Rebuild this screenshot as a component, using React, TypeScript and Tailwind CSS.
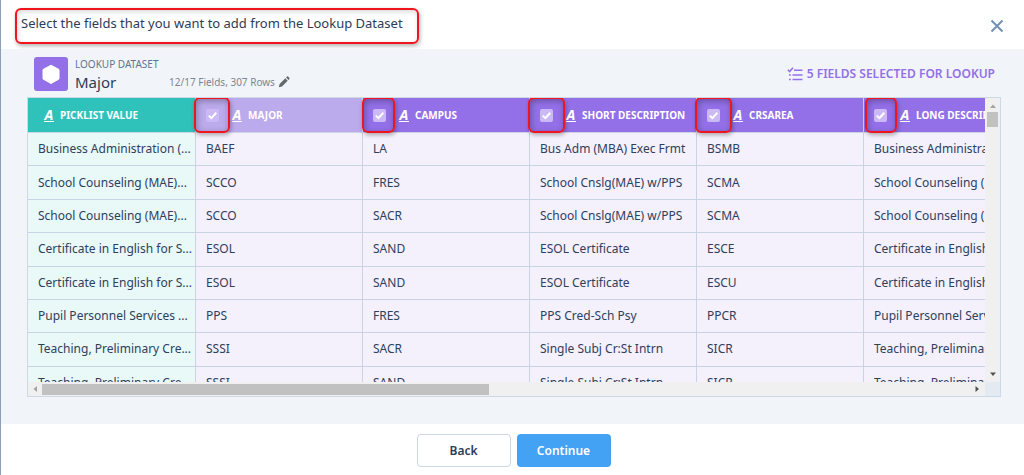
import type { ReactNode } from 'react';
import { clsx } from 'clsx';

type Column = {
  label: string;
  header: string;
  // frame drawn round the column's check box
  frame?: string;
};

const columns: Column[] = [
  { label: 'Picklist Value', header: 'w-[168px] bg-[#2fc2ba]' },
  { label: 'Major', header: 'w-[167px] bg-[#bbaaec]', frame: '-left-0.5 w-9' },
  { label: 'Campus', header: 'w-[167px] bg-[#9370e8]', frame: '-left-px w-[33px]' },
  { label: 'Short Description', header: 'w-[167px] bg-[#9370e8]', frame: '-left-0.5 w-[37px]' },
  { label: 'CRSAREA', header: 'w-[167px] bg-[#9370e8]', frame: '-left-0.5 w-[37px]' },
  { label: 'Long Description', header: 'w-[167px] bg-[#9370e8]', frame: 'left-px w-8' },
];

const rows = [
  ['Business Administration (...', 'BAEF', 'LA', 'Bus Adm (MBA) Exec Frmt', 'BSMB', 'Business Administration'],
  ['School Counseling (MAE)...', 'SCCO', 'FRES', 'School Cnslg(MAE) w/PPS', 'SCMA', 'School Counseling (MAE)'],
  ['School Counseling (MAE)...', 'SCCO', 'SACR', 'School Cnslg(MAE) w/PPS', 'SCMA', 'School Counseling (MAE)'],
  ['Certificate in English for S...', 'ESOL', 'SAND', 'ESOL Certificate', 'ESCE', 'Certificate in English'],
  ['Certificate in English for S...', 'ESOL', 'SAND', 'ESOL Certificate', 'ESCU', 'Certificate in English'],
  ['Pupil Personnel Services ...', 'PPS', 'FRES', 'PPS Cred-Sch Psy', 'PPCR', 'Pupil Personnel Services'],
  ['Teaching, Preliminary Cre...', 'SSSI', 'SACR', 'Single Subj Cr:St Intrn', 'SICR', 'Teaching, Preliminary'],
  ['Teaching, Preliminary Cre...', 'SSSI', 'SAND', 'Single Subj Cr:St Intrn', 'SICR', 'Teaching, Preliminary'],
];

function TextTypeIcon() {
  return (
    <span aria-hidden="true" className="w-2.5 border-b border-white text-center text-sm leading-3 font-bold italic">
      A
    </span>
  );
}

function FieldCheckbox({ label }: { label: string }) {
  return (
    <span className="mr-[13px] grid size-[13px] shrink-0">
      <input
        type="checkbox"
        defaultChecked
        aria-label={`Add ${label}`}
        className="peer col-start-1 row-start-1 size-[13px] appearance-none rounded-xs bg-[#cbb9f5]"
      />
      <svg
        viewBox="0 0 13 13"
        className="pointer-events-none invisible col-start-1 row-start-1 size-[13px] peer-checked:visible"
        fill="none"
        stroke="white"
        strokeWidth="2"
      >
        <path d="M2.8 6.6 5.4 9.1 10.3 3.8" />
      </svg>
    </span>
  );
}

function HeaderCell({ column }: { column: Column }) {
  return (
    <th
      scope="col"
      className={clsx('relative h-[35px] border-r border-b border-[#cbd5e6] p-0 text-left', column.header)}
    >
      <div className={clsx('flex items-center', column.frame ? 'pl-2.5' : 'pl-4')}>
        {column.frame && <FieldCheckbox label={column.label} />}
        <TextTypeIcon />
        <span className="ml-1.5 text-[10px] leading-4 font-bold whitespace-nowrap uppercase">{column.label}</span>
      </div>
      {column.frame && (
        <span
          className={clsx(
            'pointer-events-none absolute -top-px z-10 h-9 rounded-md border-2 border-[#f0141e] shadow-[1px_2px_4px_rgba(0,0,0,0.3),inset_1px_2px_6px_rgba(0,0,0,0.3)]',
            column.frame,
          )}
        />
      )}
    </th>
  );
}

function FieldsTable() {
  return (
    <table className="h-[302px] w-[1003px] table-fixed border-separate border-spacing-0">
      <thead className="text-white">
        <tr>
          {columns.map((column) => (
            <HeaderCell key={column.label} column={column} />
          ))}
        </tr>
      </thead>
      <tbody className="text-xs text-[#2f405c]">
        {rows.map((row, i) => (
          <tr key={i}>
            {row.map((value, j) => (
              <td
                key={j}
                className={clsx(
                  'border-r border-b border-[#c9d4e3] py-0 pr-0.5 pl-2.5 whitespace-nowrap',
                  j === 0 ? 'bg-[#e8f9f8]' : 'bg-[#f4f0fc]',
                )}
              >
                {value}
              </td>
            ))}
          </tr>
        ))}
      </tbody>
    </table>
  );
}

function Arrow({ d, className }: { d: string; className: string }) {
  return (
    <svg viewBox="0 0 8 8" className={clsx('size-2 shrink-0', className)} fill="currentColor" aria-hidden="true">
      <path d={d} />
    </svg>
  );
}

function ScrollFrame({ children }: { children: ReactNode }) {
  return (
    <div className="grid h-[300px] grid-cols-[minmax(0,1fr)_15px] grid-rows-[minmax(0,1fr)_14px] border border-[#cfd9e6] bg-[#e4eaf2]">
      <div className="overflow-hidden">{children}</div>
      <div className="flex flex-col items-center bg-[#f0f0f0] py-1">
        <Arrow d="M1 6 4 2.5 7 6z" className="text-[#a3a3a3]" />
        <div className="mt-0.5 h-[15px] w-[11px] bg-[#c1c1c1]" />
        <Arrow d="M1 2.5 4 6 7 2.5z" className="mt-auto text-[#505050]" />
      </div>
      <div className="flex items-center bg-[#f0f0f0] pr-1 pl-[3px]">
        <Arrow d="M6 1 2.5 4 6 7z" className="text-[#a3a3a3]" />
        <div className="ml-[3px] h-[11px] w-[47%] bg-[#c1c1c1]" />
        <Arrow d="M2.5 1 6 4 2.5 7z" className="ml-auto text-[#505050]" />
      </div>
    </div>
  );
}

function DatasetHeader() {
  return (
    <div className="flex items-center justify-between pr-1.5 pl-[7px]">
      <div className="flex items-center gap-[7px]">
        <svg viewBox="0 0 34 34" className="size-[34px]" aria-hidden="true">
          <rect width="34" height="34" rx="3" fill="#9370e8" />
          <path d="M17 8.2 25 12.5V22L17 26.5 9 22V12.5z" fill="white" stroke="white" strokeLinejoin="round" />
        </svg>
        <div>
          <p className="text-[10px] leading-4 text-[#5f7594] uppercase">Lookup Dataset</p>
          <div className="flex items-center">
            <h2 className="w-[94px] text-[15px] leading-5 text-[#2b3c58]">Major</h2>
            <span className="text-[10px] leading-5 text-[#7d8590]">12/17 Fields, 307 Rows</span>
            <button type="button" aria-label="Edit fields" className="ml-[3px] text-[#626870]">
              <svg viewBox="0 0 12 12" className="size-3" fill="currentColor">
                <path d="M.8 11.2 1.6 8 7.3 2.3 9.7 4.7 4 10.4zM8.1 1.5 9 .6a.8.8 0 0 1 1.1 0l1.3 1.3a.8.8 0 0 1 0 1.1l-.9.9z" />
              </svg>
            </button>
          </div>
        </div>
      </div>
      <div className="flex items-center gap-1 text-[#9370e8]">
        <svg viewBox="0 0 16 16" className="size-4" fill="none" stroke="currentColor" strokeWidth="1.5" aria-hidden="true">
          <path d="M.8 3.8 2.6 5.6 6 1.8M7 4.2H15.5M5.5 9H15.5M5.5 13.5H15.5M2 9H3.8M2 13.5H3.8" />
        </svg>
        <span className="text-xs font-semibold uppercase">5 fields selected for lookup</span>
      </div>
    </div>
  );
}

export default function App() {
  return (
    <div className="flex min-h-screen flex-col border-l border-[#8e9eb8] bg-white font-['Noto_Sans',sans-serif]">
      <header className="flex h-[49px] items-center justify-between pt-[3px] pr-5 pl-[14px]">
        <h1 className="h-9 rounded-md border-2 border-[#f0141e] pr-3.5 pl-1 text-[13px] leading-[26px] text-[#2b3c58] shadow-[1px_2px_4px_rgba(0,0,0,0.3),inset_1px_2px_5px_rgba(0,0,0,0.15)]">
          Select the fields that you want to add from the Lookup Dataset
        </h1>
        <button type="button" aria-label="Close" className="text-[#7291b3]">
          <svg viewBox="0 0 14 14" className="size-3.5" fill="none" stroke="currentColor" strokeWidth="2">
            <path d="M1.5 1.5 12.5 12.5M12.5 1.5 1.5 12.5" />
          </svg>
        </button>
      </header>
      <main className="flex flex-col gap-[5px] bg-[#f1f4f9] pt-[7px] pr-[23px] pb-[27px] pl-[26px]">
        <DatasetHeader />
        <ScrollFrame>
          <FieldsTable />
        </ScrollFrame>
      </main>
      <footer className="flex justify-center gap-1.5 pt-2.5 pb-2 pl-0.5 text-xs font-semibold">
        <button type="button" className="h-[33px] w-[94px] rounded-sm border border-[#cbd6e4] bg-white text-[#2b3c58]">
          Back
        </button>
        <button type="button" className="h-[33px] w-[94px] rounded-sm bg-[#44a2f5] text-white">
          Continue
        </button>
      </footer>
    </div>
  );
}
